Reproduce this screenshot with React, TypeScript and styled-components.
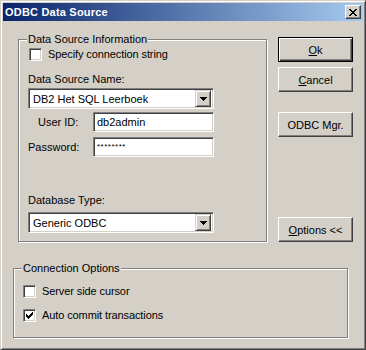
import React from 'react';
import styled, { createGlobalStyle } from 'styled-components';

const Global = createGlobalStyle`
  html, body { margin: 0; padding: 0; background: #d4d0c8; }
  * { box-sizing: border-box; }
`;

const Window = styled.div`
  width: 366px;
  height: 350px;
  display: flex;
  flex-direction: column;
  padding: 2px;
  background: #d4d0c8;
  border: 1px solid;
  border-color: #d4d0c8 #404040 #404040 #d4d0c8;
  box-shadow: inset 1px 1px 0 #fff, inset -1px -1px 0 #808080;
  font-family: "Liberation Sans", Arial, sans-serif;
  font-size: 11px;
  color: #000;
`;

const TitleBar = styled.div`
  height: 18px;
  display: flex;
  align-items: center;
  justify-content: space-between;
  padding: 0 2px 0 2px;
  background: linear-gradient(to right, #0a246a, #a6caf0);
`;

const Title = styled.span`
  color: #fff;
  font-weight: bold;
  font-size: 11px;
  letter-spacing: 0.2px;
`;

const CloseButton = styled.div`
  width: 16px;
  height: 14px;
  display: flex;
  align-items: center;
  justify-content: center;
  background: #d4d0c8;
  border: 1px solid;
  border-color: #fff #404040 #404040 #fff;
  box-shadow: inset -1px -1px 0 #808080;
`;

const Body = styled.div`
  flex: 1;
  display: flex;
  flex-direction: column;
  padding: 16px 0 0 0;
`;

const TopRow = styled.div`
  display: flex;
  gap: 11px;
  padding-left: 15px;
`;

const GroupBox = styled.div<{ $w: number; $h: number }>`
  position: relative;
  width: ${p => p.$w}px;
  height: ${p => p.$h}px;
  border: 1px solid #808080;
  box-shadow: 1px 1px 0 #fff, inset 1px 1px 0 #fff;
  display: flex;
  flex-direction: column;
`;

const Caption = styled.span`
  position: absolute;
  top: -8px;
  left: 8px;
  padding: 0 1px;
  line-height: 14px;
  background: #d4d0c8;
`;

const InfoBox = styled(GroupBox)`
  margin-top: 2px;
  padding: 8px 0 0 9px;
`;

const OptionsBox = styled(GroupBox)`
  margin: 26px 0 0 10px;
  padding: 16px 0 0 9px;
  gap: 11px;
`;

const CheckRow = styled.label`
  display: flex;
  align-items: center;
  gap: 6px;
  height: 13px;
  line-height: 13px;
  letter-spacing: -0.1px;
`;

const CheckBox = styled.span`
  width: 13px;
  height: 13px;
  flex: none;
  display: flex;
  align-items: center;
  justify-content: center;
  background: #fff;
  border: 1px solid;
  border-color: #808080 #fff #fff #808080;
  box-shadow: inset 1px 1px 0 #404040, inset -1px -1px 0 #d4d0c8;
`;

const InfoCheck = styled(CheckRow)`
  margin-left: 1px;
`;

const Label = styled.div<{ $top: number }>`
  margin-top: ${p => p.$top}px;
  line-height: 13px;
`;

const Sunken = styled.div`
  height: 21px;
  background: #fff;
  border: 1px solid;
  border-color: #808080 #fff #fff #808080;
  box-shadow: inset 1px 1px 0 #404040, inset -1px -1px 0 #d4d0c8;
  padding: 2px;
  display: flex;
  align-items: center;
`;

const Combo = styled(Sunken)<{ $top: number }>`
  width: 186px;
  margin-top: ${p => p.$top}px;
  padding: 2px 2px 2px 4px;
  justify-content: space-between;
`;

const DropButton = styled.div`
  width: 16px;
  height: 17px;
  display: flex;
  align-items: center;
  justify-content: center;
  background: #d4d0c8;
  border: 1px solid;
  border-color: #d4d0c8 #404040 #404040 #d4d0c8;
  box-shadow: inset 1px 1px 0 #fff, inset -1px -1px 0 #808080;
`;

const FieldRow = styled.div<{ $top: number }>`
  display: grid;
  grid-template-columns: 65px 121px;
  align-items: center;
  margin-top: ${p => p.$top}px;
`;

const FieldLabel = styled.span<{ $indent?: number }>`
  padding-left: ${p => p.$indent || 0}px;
`;

const TextBox = styled(Sunken)`
  height: 20px;
  padding: 2px 3px;
`;

const Stars = styled.span`
  font-size: 8px;
  letter-spacing: 0.5px;
  margin-top: -2px;
`;

const ButtonColumn = styled.div`
  display: flex;
  flex-direction: column;
`;

const Button = styled.div<{ $default?: boolean; $top?: number }>`
  width: 75px;
  height: 25px;
  margin-top: ${p => p.$top || 0}px;
  display: flex;
  align-items: center;
  justify-content: center;
  background: #d4d0c8;
  border: 1px solid;
  border-color: ${p => (p.$default ? '#000' : '#fff #404040 #404040 #fff')};
  box-shadow: ${p =>
    p.$default
      ? 'inset 1px 1px 0 #fff, inset -1px -1px 0 #404040, inset -2px -2px 0 #808080'
      : 'inset -1px -1px 0 #808080'};
`;

const OptionsButton = styled(Button)`
  margin-top: auto;
`;

const CheckMark = () => (
  <svg width="7" height="7" viewBox="0 0 7 7" shapeRendering="crispEdges">
    <path d="M0 2h1v3H0z M1 3h1v3H1z M2 4h1v3H2z M3 3h1v3H3z M4 2h1v3H4z M5 1h1v3H5z M6 0h1v3H6z" fill="#000" />
  </svg>
);

const DownArrow = () => (
  <svg width="7" height="4" viewBox="0 0 7 4" shapeRendering="crispEdges">
    <path d="M0 0h7v1H0z M1 1h5v1H1z M2 2h3v1H2z M3 3h1v1H3z" fill="#000" />
  </svg>
);

const CloseGlyph = () => (
  <svg width="8" height="7" viewBox="0 0 8 7" shapeRendering="crispEdges">
    <path
      d="M0 0h2v1H0z M6 0h2v1H6z M1 1h2v1H1z M5 1h2v1H5z M2 2h4v1H2z M3 3h2v1H3z M2 4h4v1H2z M1 5h2v1H1z M5 5h2v1H5z M0 6h2v1H0z M6 6h2v1H6z"
      fill="#000"
    />
  </svg>
);

export default function App() {
  return (
    <>
      <Global />
      <Window>
        <TitleBar>
          <Title>ODBC Data Source</Title>
          <CloseButton>
            <CloseGlyph />
          </CloseButton>
        </TitleBar>
        <Body>
          <TopRow>
            <InfoBox $w={249} $h={203}>
              <Caption>Data Source Information</Caption>
              <InfoCheck>
                <CheckBox />
                Specify connection string
              </InfoCheck>
              <Label $top={12}>Data Source Name:</Label>
              <Combo $top={2}>
                <span>DB2 Het SQL Leerboek</span>
                <DropButton>
                  <DownArrow />
                </DropButton>
              </Combo>
              <FieldRow $top={3}>
                <FieldLabel $indent={10}>User ID:</FieldLabel>
                <TextBox>db2admin</TextBox>
              </FieldRow>
              <FieldRow $top={5}>
                <FieldLabel>Password:</FieldLabel>
                <TextBox>
                  <Stars>********</Stars>
                </TextBox>
              </FieldRow>
              <Label $top={37}>Database Type:</Label>
              <Combo $top={5}>
                <span>Generic ODBC</span>
                <DropButton>
                  <DownArrow />
                </DropButton>
              </Combo>
            </InfoBox>
            <ButtonColumn>
              <Button $default>
                <span><u>O</u>k</span>
              </Button>
              <Button $top={5}>
                <span><u>C</u>ancel</span>
              </Button>
              <Button $top={20}>ODBC Mgr.</Button>
              <OptionsButton>
                <span><u>O</u>ptions &lt;&lt;</span>
              </OptionsButton>
            </ButtonColumn>
          </TopRow>
          <OptionsBox $w={335} $h={70}>
            <Caption>Connection Options</Caption>
            <CheckRow>
              <CheckBox />
              Server side cursor
            </CheckRow>
            <CheckRow>
              <CheckBox>
                <CheckMark />
              </CheckBox>
              Auto commit transactions
            </CheckRow>
          </OptionsBox>
        </Body>
      </Window>
    </>
  );
}
